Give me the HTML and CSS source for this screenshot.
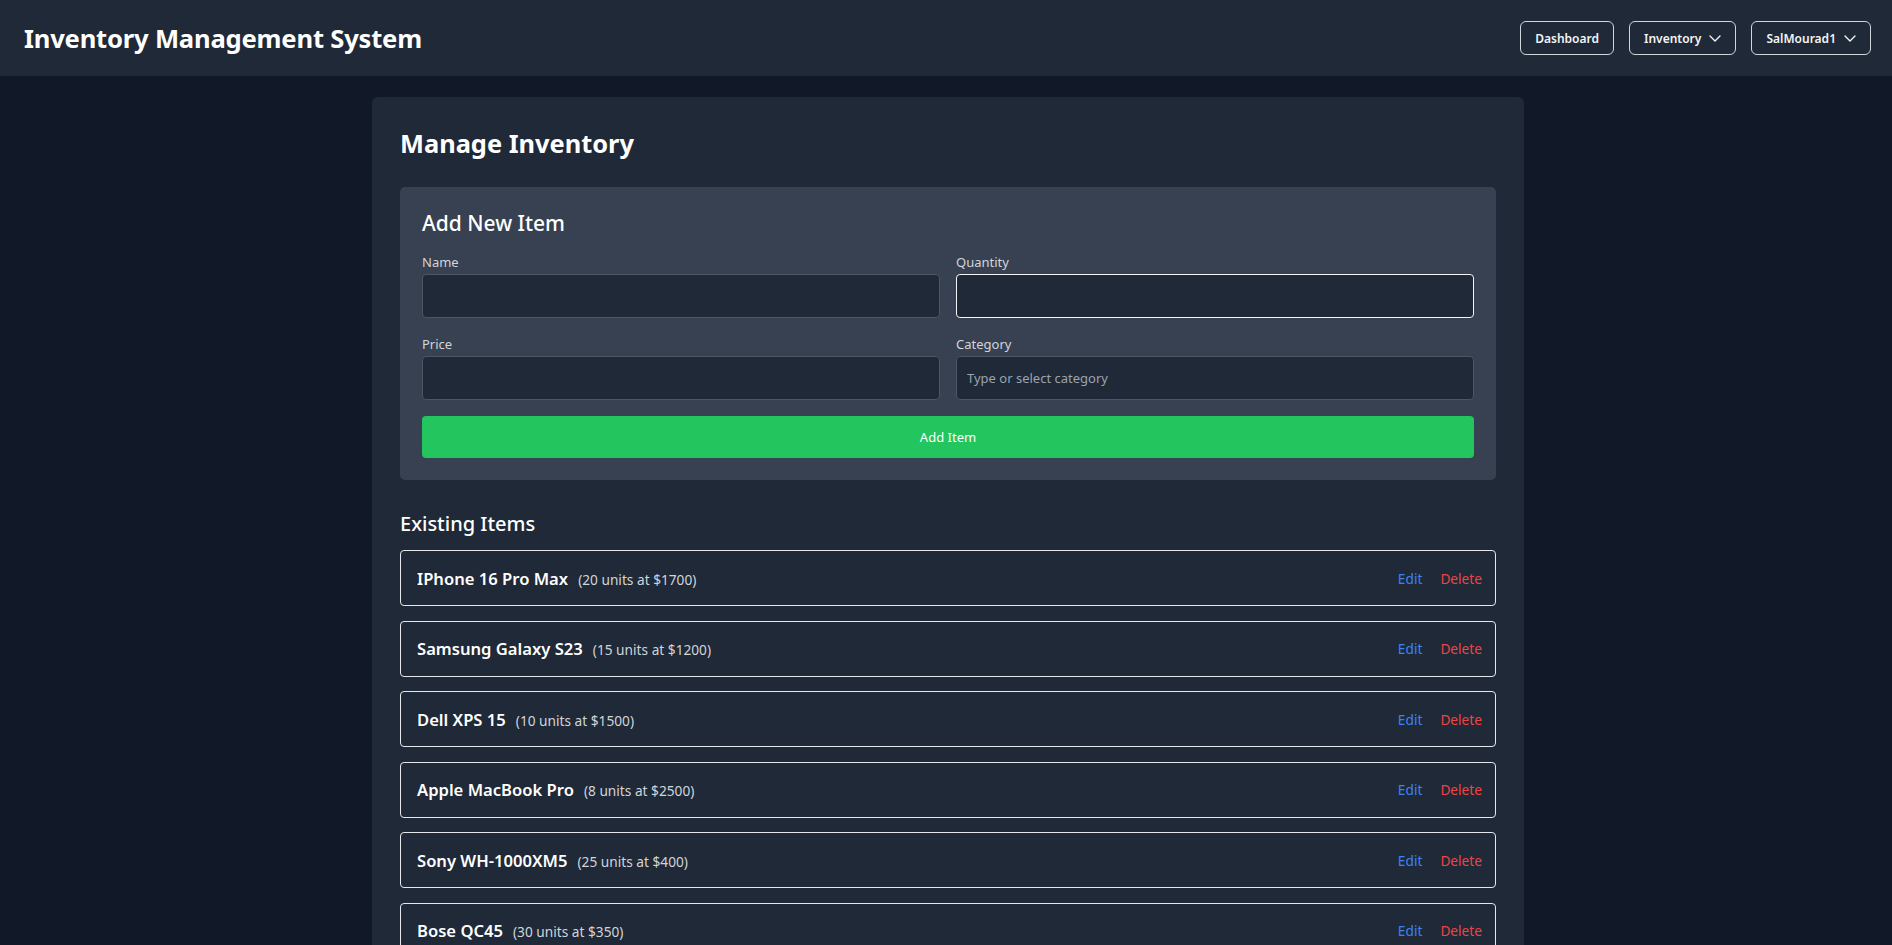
FILE: index.html
```html
<!DOCTYPE html>
<html lang="en">
<head>
<meta charset="utf-8">
<title>Inventory Management System</title>
<link rel="stylesheet" href="styles.css">
</head>
<body>
<header class="topbar">
  <div class="brand">Inventory Management System</div>
  <nav class="nav">
    <button class="nav-btn">Dashboard</button>
    <button class="nav-btn">Inventory
      <svg class="chev" viewBox="0 0 12 7" width="12" height="7"><path d="M1 1l5 5 5-5" fill="none" stroke="currentColor" stroke-width="1.4" stroke-linecap="round" stroke-linejoin="round"/></svg>
    </button>
    <button class="nav-btn">SalMourad1
      <svg class="chev" viewBox="0 0 12 7" width="12" height="7"><path d="M1 1l5 5 5-5" fill="none" stroke="currentColor" stroke-width="1.4" stroke-linecap="round" stroke-linejoin="round"/></svg>
    </button>
  </nav>
</header>

<div class="page">
<main class="card">
  <h1 class="page-title">Manage Inventory</h1>

  <section class="form-box">
    <h2 class="form-title">Add New Item</h2>
    <div class="form-grid">
      <div class="field">
        <label class="label">Name</label>
        <input class="input" type="text">
      </div>
      <div class="field">
        <label class="label">Quantity</label>
        <input class="input focused" type="text">
      </div>
      <div class="field">
        <label class="label">Price</label>
        <input class="input" type="text">
      </div>
      <div class="field">
        <label class="label">Category</label>
        <input class="input" type="text" placeholder="Type or select category">
      </div>
    </div>
    <button class="add-btn">Add Item</button>
  </section>

  <h2 class="list-title">Existing Items</h2>
  <ul class="items">
    <li class="item"><div class="item-info"><span class="item-name">IPhone 16 Pro Max</span><span class="item-meta">(20 units at $1700)</span></div><div class="actions"><a class="edit">Edit</a><a class="delete">Delete</a></div></li>
    <li class="item"><div class="item-info"><span class="item-name">Samsung Galaxy S23</span><span class="item-meta">(15 units at $1200)</span></div><div class="actions"><a class="edit">Edit</a><a class="delete">Delete</a></div></li>
    <li class="item"><div class="item-info"><span class="item-name">Dell XPS 15</span><span class="item-meta">(10 units at $1500)</span></div><div class="actions"><a class="edit">Edit</a><a class="delete">Delete</a></div></li>
    <li class="item"><div class="item-info"><span class="item-name">Apple MacBook Pro</span><span class="item-meta">(8 units at $2500)</span></div><div class="actions"><a class="edit">Edit</a><a class="delete">Delete</a></div></li>
    <li class="item"><div class="item-info"><span class="item-name">Sony WH-1000XM5</span><span class="item-meta">(25 units at $400)</span></div><div class="actions"><a class="edit">Edit</a><a class="delete">Delete</a></div></li>
    <li class="item"><div class="item-info"><span class="item-name">Bose QC45</span><span class="item-meta">(30 units at $350)</span></div><div class="actions"><a class="edit">Edit</a><a class="delete">Delete</a></div></li>
  </ul>
</main>
</div>
</body>
</html>
```

FILE: styles.css
```css
* { box-sizing: border-box; }

html, body {
  margin: 0;
  padding: 0;
}

body {
  background: #111827;
  color: #f9fafb;
  font-family: "Noto Sans", "Open Sans", sans-serif;
}

.topbar {
  height: 76px;
  background: #1f2937;
  display: flex;
  align-items: center;
  justify-content: space-between;
  padding: 0 21px 0 24px;
}

.brand {
  font-size: 25.6px;
  font-weight: 700;
  color: #ffffff;
  letter-spacing: -0.2px;
}

.nav {
  display: flex;
  gap: 15px;
  align-items: center;
}

.nav-btn {
  display: flex;
  align-items: center;
  gap: 8px;
  height: 34px;
  padding: 0 14px;
  background: transparent;
  border: 1px solid #d1d5db;
  border-radius: 6px;
  color: #f3f4f6;
  font-family: inherit;
  font-size: 12px;
  font-weight: 600;
}

.chev { display: block; }

.page {
  padding: 21px 0 0 4px;
}

.card {
  width: 1152px;
  margin: 0 auto;
  background: #1f2937;
  border-radius: 6px;
  padding: 28px;
}

.page-title {
  margin: 0 0 26px;
  font-size: 25.4px;
  line-height: 36px;
  font-weight: 700;
  color: #ffffff;
}

.form-box {
  background: #374151;
  border-radius: 5px;
  padding: 22px;
}

.form-title {
  margin: 0 0 15px;
  font-size: 21px;
  line-height: 28px;
  font-weight: 500;
  color: #ffffff;
}

.form-grid {
  display: grid;
  grid-template-columns: 1fr 1fr;
  column-gap: 16px;
  row-gap: 16px;
}

.field {
  display: flex;
  flex-direction: column;
}

.label {
  font-size: 13px;
  line-height: 20px;
  color: #d1d5db;
  margin-bottom: 2px;
}

.input {
  height: 44px;
  background: #1f2937;
  border: 1px solid #4b5563;
  border-radius: 4px;
  padding: 0 10px;
  color: #f9fafb;
  font-family: inherit;
  font-size: 13px;
  outline: none;
}

.input::placeholder { color: #9ca3af; }

.input.focused {
  border-color: #f3f4f6;
}

.add-btn {
  display: block;
  width: 100%;
  height: 42px;
  margin-top: 16px;
  background: #22c55e;
  border: none;
  border-radius: 4px;
  color: #ffffff;
  font-family: inherit;
  font-size: 13px;
}

.list-title {
  margin: 30px 0 12px;
  font-size: 20px;
  line-height: 28px;
  font-weight: 500;
  color: #ffffff;
}

.items {
  list-style: none;
  margin: 0;
  padding: 0;
  display: flex;
  flex-direction: column;
  gap: 14.5px;
}

.item {
  height: 56px;
  border: 1px solid #e5e7eb;
  border-radius: 4px;
  display: flex;
  align-items: center;
  justify-content: space-between;
  padding: 0 13px 0 16px;
}

.item-info {
  display: flex;
  align-items: baseline;
}

.item-name {
  font-size: 16.6px;
  font-weight: 600;
  color: #ffffff;
}

.item-meta {
  margin-left: 10px;
  font-size: 13.7px;
  color: #d1d5db;
}

.actions {
  display: flex;
  gap: 18px;
  font-size: 13.7px;
}

.edit { color: #3b82f6; }
.delete { color: #ef4444; }
```
